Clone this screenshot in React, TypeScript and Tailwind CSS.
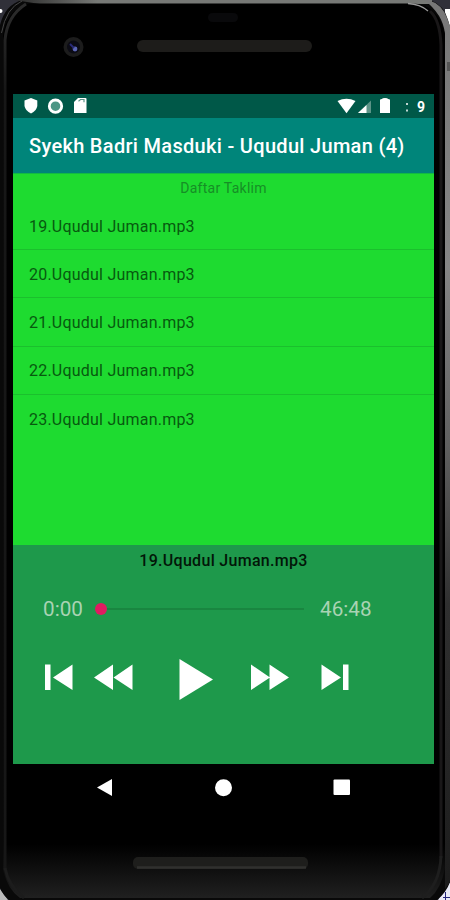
import React from "react";

const tracks = ["19", "20", "21", "22", "23"].map((n) => `${n}.Uqudul Juman.mp3`);

function Frame() {
  return (
    <svg className="absolute inset-0" width="450" height="900" viewBox="0 0 450 900">
      <defs>
        <linearGradient id="body" x1="0" y1="0" x2="0" y2="1">
          <stop offset="0" stopColor="#000" />
          <stop offset="0.94" stopColor="#000" />
          <stop offset="0.97" stopColor="#101010" />
          <stop offset="1" stopColor="#202020" />
        </linearGradient>
        <linearGradient id="edge" x1="0" y1="0" x2="0" y2="1">
          <stop offset="0" stopColor="#777" />
          <stop offset="0.3" stopColor="#858585" />
          <stop offset="0.5" stopColor="#606060" />
          <stop offset="0.68" stopColor="#303030" />
          <stop offset="1" stopColor="#1c1c1c" />
        </linearGradient>
        <linearGradient id="top" x1="0" y1="0" x2="1" y2="0">
          <stop offset="0" stopColor="#2a2a2a" />
          <stop offset="0.2" stopColor="#777976" />
          <stop offset="1" stopColor="#777976" />
        </linearGradient>
        <linearGradient id="side" x1="0" y1="0" x2="0" y2="1">
          <stop offset="0" stopColor="#2c2c2c" />
          <stop offset="0.1" stopColor="#171717" />
          <stop offset="1" stopColor="#171717" />
        </linearGradient>
      </defs>
      <rect width="450" height="900" fill="#303039" />
      <rect x="445" y="9" width="5" height="20" fill="#fff" />
      <circle cx="0.500" cy="11" r="2" fill="#fff" />
      <path d="M0 889V900H8Z" fill="#bbb" />
      <path d="M450 882V900H438Z" fill="#e8e8f4" />
      <path d="M443 897.500H450M445.500 900V892" stroke="#26267a" />
      <path d="M0 25Q5 5 22 0H430Q444 5 448 20L450 27V882Q446 893 437 900H9Q3 895 0 888Z" fill="#090909" />
      <path d="M14 0H432V4H40Z" fill="url(#top)" />
      <path d="M428 0Q442 4 447 18L450 26V882L445 889V34Q443 14 424 0Z" fill="url(#edge)" />
      <path d="M3 35Q6 10 29 3.500H412Q438 4 445 34V868Q441 889 430 898H20Q8 890 3 870Z" fill="url(#body)" />
      <path d="M5 870V40Q7 16 26 4" fill="none" stroke="url(#side)" strokeWidth="3" />
      <path d="M1.500 33Q6 8 22 1" fill="none" stroke="#454545" strokeWidth="1" />
      <path d="M441 858V45Q440 20 430 11" fill="none" stroke="#191718" strokeWidth="3" />
      <path d="M441 856Q440 884 422 898" fill="none" stroke="#1e1e1e" strokeWidth="3" />
      <path d="M5 868Q8 885 24 898" fill="none" stroke="#1c1c1c" strokeWidth="3" />
      <path d="M408 3.500Q420 4 428 11" fill="none" stroke="#999" strokeWidth="1.300" />
      <rect x="447" y="62" width="3" height="9" fill="#555" />
      <circle cx="73.500" cy="47" r="10" fill="#1c1c1c" />
      <circle cx="73.500" cy="47" r="6.500" fill="#0b0b14" />
      <circle cx="75" cy="49" r="2.400" fill="#5b65b4" />
      <path d="M70 44L74 48" stroke="#292a78" strokeWidth="2" />
      <rect x="208" y="13" width="30" height="9" rx="4.500" fill="#09090b" />
      <rect x="137" y="40" width="175" height="12" rx="6" fill="#1d1c1a" />
      <rect x="133" y="857" width="175" height="12" rx="5" fill="#1e1e1c" />
      <path d="M137 867.500H306" stroke="#30302e" strokeWidth="2.500" />
    </svg>
  );
}

function StatusBar() {
  return (
    <div className="h-6 shrink-0 bg-[#005848]">
      <svg width="421" height="24" viewBox="13 94 421 24" fill="#fff">
        <path d="M31 98L37.300 100.500V106Q36.500 111 31 113.500Q25.500 111 24.500 106V100.500Z" />
        <circle cx="55.500" cy="106.200" r="6.200" fill="#4c9685" stroke="#fff" strokeWidth="2.800" />
        <path d="M78 98H85.500Q86.500 98 86.500 99V113H74V102Z" />
        <path d="M78.500 101.200L80.500 99.500H84V102.200" fill="none" stroke="#5c9588" strokeWidth="1.200" />
        <path d="M337.500 101Q346.500 96.500 355.500 101L346.500 113.200Z" />
        <path d="M358 113L371 100.500V113Z" fill="#5c9487" />
        <path d="M358 113L366.500 105V113Z" />
        <path d="M380 100Q380 99 382 99Q382 98 385 98Q388 98 388 99Q390 99 390 100V113H380Z" />
        <rect x="406" y="103" width="2" height="2" opacity=".75" />
        <rect x="406" y="109.500" width="2" height="2" opacity=".75" />
        <text x="417" y="111.800" fontSize="14" fontWeight="700" className="font-['Roboto',sans-serif]">9</text>
      </svg>
    </div>
  );
}

function Player() {
  return (
    <section className="flex h-[219px] shrink-0 flex-col bg-[#1e994b]">
      <div className="h-[47px] pt-[4px] text-center text-[16px] leading-6 font-medium tracking-[0.3px] text-[#021608]">
        19.Uqudul Juman.mp3
      </div>
      <div className="flex h-8 items-center pl-[30px] text-[20.7px] text-[#a9d3b3]">
        <span className="w-[52px] pt-[3px]">0:00</span>
        <div className="flex w-[209px] items-center pt-px">
          <div className="size-3 rounded-full bg-[#e01b61]" />
          <div className="h-[2px] w-[197px] bg-[#198640]" />
        </div>
        <span className="ml-[16px] pt-[3px]">46:48</span>
      </div>
      <svg className="mt-[20px]" width="421" height="70" viewBox="13 644 421 70" fill="#fff">
        <path d="M45 664.500H50.500V690H45ZM72.500 664.500V690L53 677.500Z" />
        <path d="M113 664.500V690L94 677.500ZM132.500 664.500V690L113.500 677.500Z" />
        <path d="M179.500 659V700L213 679.500Z" />
        <path d="M251 664.500V690L270 677.500ZM269.500 664.500V690L289 677.500Z" />
        <path d="M321.500 664.500V690L341 677.500ZM343 664.500H348.500V690H343Z" />
      </svg>
    </section>
  );
}

export default function App() {
  return (
    <main className="relative h-[900px] w-[450px] overflow-hidden font-['Roboto',sans-serif]">
      <Frame />
      <div className="relative flex h-full flex-col pt-[94px] pr-4 pl-[13px]">
        <StatusBar />
        <header className="flex h-[55px] shrink-0 items-center bg-[#00857a] pl-4 text-[20px] font-medium text-white">
          <h1 className="tracking-[0.31px] whitespace-nowrap">Syekh Badri Masduki - Uqudul Juman (4)</h1>
        </header>
        <section className="h-[372px] shrink-0 bg-[#1edb30]">
          <p className="h-[29px] border-t border-[#12bb43] pt-1 text-center text-[14px] leading-5 tracking-[0.25px] text-[#168e26]">Daftar Taklim</p>
          <ul>
            {tracks.map((track) => (
              <li key={track} className="flex h-[48.2px] items-center border-b border-[#1bc02d] pt-[2px] pl-4 text-[16px] tracking-[0.22px] text-[#07590f] last:border-b-0">
                {track}
              </li>
            ))}
          </ul>
        </section>
        <Player />
        <nav className="h-[46px] shrink-0 bg-black">
          <svg width="421" height="46" viewBox="13 764 421 46" fill="#fff">
            <path d="M112 779V796L97 787.500Z" strokeLinejoin="round" />
            <circle cx="223.500" cy="787.700" r="8.500" />
            <rect x="333.500" y="779.500" width="16.500" height="15.500" rx="1" />
          </svg>
        </nav>
      </div>
    </main>
  );
}
